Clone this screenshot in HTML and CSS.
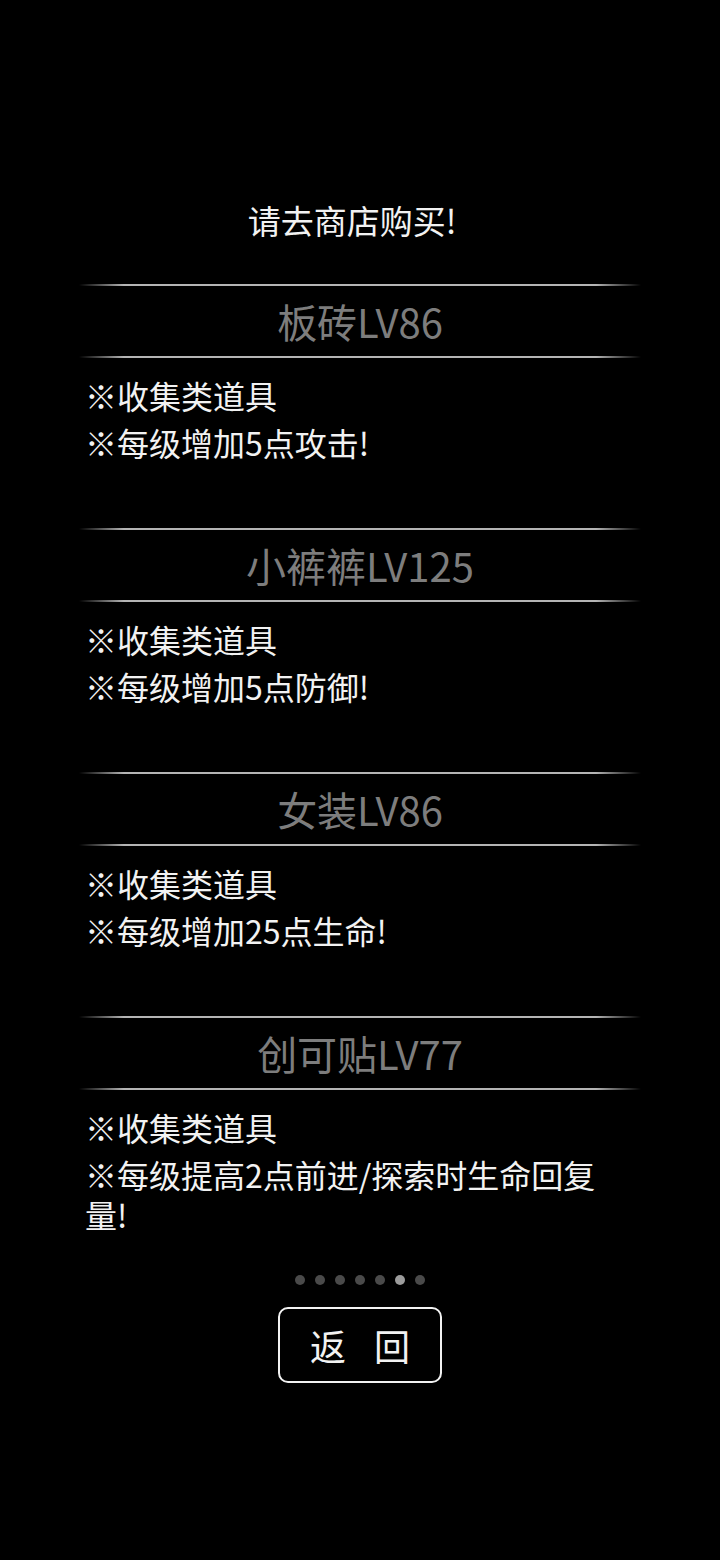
FILE: index.html
```html
<!DOCTYPE html>
<html lang="zh-CN">
<head>
    <meta charset="UTF-8">
    <meta name="viewport" content="width=device-width, initial-scale=1.0">
    <title>道具说明</title>
    <link rel="stylesheet" href="styles.css">
</head>
<body>
<div class="screen">
    <h2 class="tip">请去商店购买!</h2>

    <!-- 道具列表 -->
    <div class="item">
        <div class="rule"></div>
        <div class="item-name">板砖LV86</div>
        <div class="rule"></div>
        <div class="item-desc">
            <p>※收集类道具</p>
            <p>※每级增加5点攻击!</p>
        </div>
    </div>

    <div class="item">
        <div class="rule"></div>
        <div class="item-name">小裤裤LV125</div>
        <div class="rule"></div>
        <div class="item-desc">
            <p>※收集类道具</p>
            <p>※每级增加5点防御!</p>
        </div>
    </div>

    <div class="item">
        <div class="rule"></div>
        <div class="item-name">女装LV86</div>
        <div class="rule"></div>
        <div class="item-desc">
            <p>※收集类道具</p>
            <p>※每级增加25点生命!</p>
        </div>
    </div>

    <div class="item last">
        <div class="rule"></div>
        <div class="item-name">创可贴LV77</div>
        <div class="rule"></div>
        <div class="item-desc">
            <p>※收集类道具</p>
            <p>※每级提高2点前进/探索时生命回复量!</p>
        </div>
    </div>

    <!-- 分页 -->
    <div class="dots">
        <span></span><span></span><span></span><span></span><span></span><span class="active"></span><span></span>
    </div>

    <button class="back-btn">返回</button>
</div>
</body>
</html>
```

FILE: styles.css
```css
body {
    margin: 0;
    background-color: #000;
    font-family: "Noto Sans CJK SC", "Noto Sans", sans-serif;
    color: #f2f2f2;
}

.screen {
    width: 562px;
    margin: 0 auto;
    padding-top: 200px;
    padding-bottom: 100px;
}

.tip {
    margin: 0 0 44px;
    padding-right: 16px;
    font-size: 33px;
    font-weight: normal;
    line-height: 40px;
    text-align: center;
}

.rule {
    height: 2px;
    background: linear-gradient(to right, rgba(200, 200, 200, 0), #b4b4b4 8%, #b4b4b4 92%, rgba(200, 200, 200, 0));
}

.item-name {
    height: 70px;
    line-height: 70px;
    text-align: center;
    font-size: 40px;
    color: #7d7d7d;
}

.item-desc {
    padding: 17px 0 0 6px;
    width: 530px;
    margin-bottom: 66px;
}

.item-desc p {
    margin: 0 0 7px;
    font-size: 32px;
    line-height: 40px;
}

.item-desc p:last-child {
    margin-bottom: 0;
}

.item.last .item-desc {
    margin-bottom: 0;
}

.dots {
    display: flex;
    justify-content: center;
    gap: 10px;
    margin-top: 41px;
}

.dots span {
    width: 10px;
    height: 10px;
    border-radius: 50%;
    background-color: #4a4a4a;
}

.dots span.active {
    background-color: #9c9c9c;
}

.back-btn {
    display: block;
    width: 164px;
    height: 76px;
    margin: 22px auto 0;
    padding: 0 0 0 28px;
    background: transparent;
    border: 2.5px solid #f2f2f2;
    border-radius: 10px;
    color: #f2f2f2;
    font-family: inherit;
    font-size: 36px;
    letter-spacing: 28px;
}
```
